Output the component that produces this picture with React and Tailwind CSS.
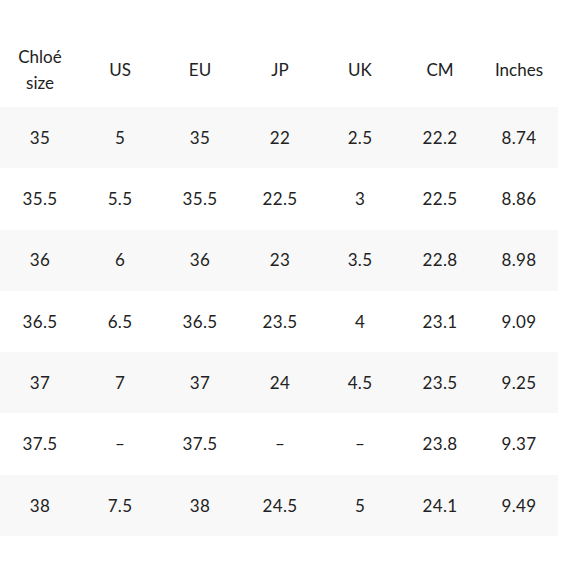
import React from 'react';

const cols = ['US', 'EU', 'JP', 'UK', 'CM', 'Inches'];

const rows = [
  ['35', '5', '35', '22', '2.5', '22.2', '8.74'],
  ['35.5', '5.5', '35.5', '22.5', '3', '22.5', '8.86'],
  ['36', '6', '36', '23', '3.5', '22.8', '8.98'],
  ['36.5', '6.5', '36.5', '23.5', '4', '23.1', '9.09'],
  ['37', '7', '37', '24', '4.5', '23.5', '9.25'],
  ['37.5', '–', '37.5', '–', '–', '23.8', '9.37'],
  ['38', '7.5', '38', '24.5', '5', '24.1', '9.49'],
];

const App = () => {
  return (
    <div className="w-[580px] h-[580px] bg-white text-[#222] font-['Lato','Liberation_Sans',sans-serif]">
      <div className="w-[558px]">
        {/* header */}
        <div className="grid grid-cols-[80px_80px_80px_80px_80px_80px_78px] h-[107px] pt-[32px] items-center text-[17px]">
          <div className="text-center leading-[26px]">Chloé<br />size</div>
          {cols.map((c) => (
            <div key={c} className="text-center">{c}</div>
          ))}
        </div>

        {rows.map((r, i) => (
          <div
            key={i}
            className={`grid grid-cols-[80px_80px_80px_80px_80px_80px_78px] h-[61.3px] items-center text-[17px] tracking-[0.3px] ${i % 2 === 0 ? 'bg-[#f8f8f8]' : 'bg-white'}`}
          >
            {r.map((v, j) => (
              <div key={j} className="text-center">{v}</div>
            ))}
          </div>
        ))}
      </div>
    </div>
  );
};

export default App;
